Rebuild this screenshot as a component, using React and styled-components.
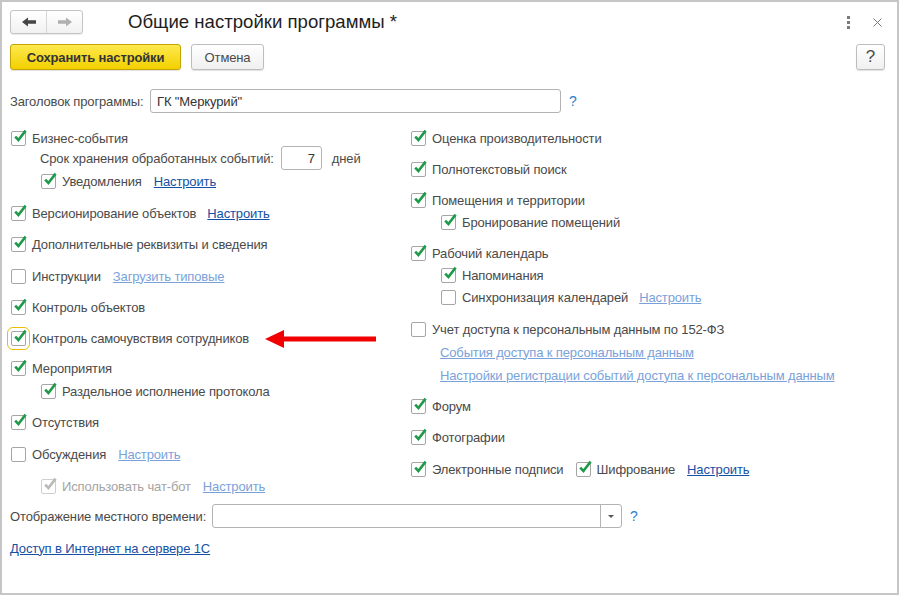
import React from 'react';
import styled, { createGlobalStyle } from 'styled-components';

const Global = createGlobalStyle`
  html, body { margin: 0; padding: 0; background: #fff; }
  body {
    font-family: "Liberation Sans", Arial, sans-serif;
    font-size: 13px;
    letter-spacing: -0.14px;
    color: #4a4a4a;
  }
`;

const Window = styled.div`
  box-sizing: border-box;
  width: 899px;
  height: 595px;
  border: 2px solid #c6c6c6;
  background: #fff;
  position: relative;
  padding: 8px 8px 0 8px;
`;

const Header = styled.div`
  display: flex;
  align-items: center;
  height: 24px;
`;

const NavGroup = styled.div`
  box-sizing: border-box;
  display: flex;
  width: 73px;
  height: 24px;
  border: 1px solid #c4c4c4;
  border-radius: 3px;
  background: linear-gradient(#ffffff, #f1f1f1);
  box-shadow: 0 1px 1px rgba(0,0,0,0.08);
`;

const NavBtn = styled.div`
  flex: 1;
  display: flex;
  align-items: center;
  justify-content: center;
  & + & { border-left: 1px solid #d6d6d6; }
`;

const Title = styled.div`
  margin-left: 45px;
  font-size: 18.6px;
  letter-spacing: 0;
  color: #1e1e1e;
`;

const HeaderRight = styled.div`
  margin-left: auto;
  margin-right: 7px;
  display: flex;
  align-items: center;
  gap: 23px;
`;

const Dots = styled.div`
  display: flex;
  flex-direction: column;
  gap: 2px;
  & > span { width: 3px; height: 3px; background: #7a7a7a; display: block; }
`;

const ButtonsRow = styled.div`
  display: flex;
  align-items: center;
  margin-top: 10px;
  height: 26px;
`;

const Button = styled.div`
  box-sizing: border-box;
  height: 26px;
  width: ${p => p.$w}px;
  margin-left: ${p => p.$ml || 0}px;
  margin-right: ${p => p.$mr || 0}px;
  display: flex;
  align-items: center;
  justify-content: center;
  border-radius: 3px;
  font-size: ${p => p.$fs || 13}px;
  border: 1px solid ${p => (p.$primary ? '#c4a400' : '#bdbdbd')};
  background: ${p => (p.$primary ? 'linear-gradient(#fde94f, #f3d000)' : 'linear-gradient(#ffffff, #f0f0f0)')};
  font-weight: ${p => (p.$primary ? 'bold' : 'normal')};
  color: ${p => (p.$primary ? '#333' : '#4a4a4a')};
  box-shadow: 0 1px 1px rgba(0,0,0,0.12);
`;

const Spacer = styled.div`flex: 1;`;

const FieldRow = styled.div`
  display: flex;
  align-items: center;
  margin-top: ${p => p.$mt}px;
  height: 24px;
`;

const FieldLabel = styled.div`
  width: ${p => p.$w}px;
  flex: none;
  white-space: nowrap;
`;

const Input = styled.div`
  box-sizing: border-box;
  width: ${p => p.$w}px;
  height: 24px;
  border: 1px solid #b3b3b3;
  border-radius: 3px;
  display: flex;
  align-items: center;
  justify-content: ${p => (p.$right ? 'flex-end' : 'flex-start')};
  padding: 0 6px;
  color: #333;
  background: #fff;
  margin-left: ${p => p.$ml || 0}px;
`;

const Select = styled.div`
  box-sizing: border-box;
  width: 410px;
  height: 24px;
  border: 1px solid #b3b3b3;
  border-radius: 3px;
  display: flex;
  background: #fff;
`;

const SelectValue = styled.div`flex: 1;`;

const SelectBtn = styled.div`
  width: 20px;
  border-left: 1px solid #b3b3b3;
  display: flex;
  align-items: center;
  justify-content: center;
  &::after {
    content: '';
    border-left: 3px solid transparent;
    border-right: 3px solid transparent;
    border-top: 3px solid #555;
  }
`;

const HelpMark = styled.span`
  margin-left: 8px;
  color: #2a80d0;
  font-size: 14px;
`;

const Columns = styled.div`
  display: grid;
  grid-template-columns: 400px 1fr;
  margin-top: 15px;
`;

const Column = styled.div`
  display: flex;
  flex-direction: column;
`;

const Row = styled.div`
  display: flex;
  align-items: center;
  height: 20px;
  margin-top: ${p => p.$mt || 0}px;
  padding-left: ${p => p.$indent || 0}px;
  white-space: nowrap;
`;

const CheckWrap = styled.span`
  display: inline-flex;
  align-items: center;
  margin-left: ${p => p.$ml || 0}px;
  color: ${p => (p.$disabled ? '#a4a4a4' : 'inherit')};
`;

const Box = styled.span`
  position: relative;
  box-sizing: border-box;
  width: 15px;
  height: 15px;
  margin-left: 1px;
  border: 1px solid ${p => (p.$disabled ? '#cfcfcf' : '#a6a6a6')};
  border-radius: 2px;
  background: #fff;
  flex: none;
  outline: ${p => (p.$focus ? '1px solid #ecbd00' : 'none')};
  outline-offset: 3px;
`;

const CheckSvg = styled.svg`
  position: absolute;
  left: 1px;
  top: -3px;
  overflow: visible;
`;

const CheckText = styled.span`
  margin-left: 6px;
`;

const Link = styled.a`
  margin-left: ${p => p.$ml || 0}px;
  color: ${p => (p.$light ? '#7aa2da' : '#1550a4')};
  text-decoration: underline;
  cursor: pointer;
`;

const Arrow = styled.svg`
  position: absolute;
  left: 263px;
  top: 328px;
`;

function Check({ checked, label, disabled, focus, ml }) {
  return (
    <CheckWrap $disabled={disabled} $ml={ml}>
      <Box $disabled={disabled} $focus={focus}>
        {checked && (
          <CheckSvg width="14" height="14" viewBox="0 0 14 14">
            <polyline
              points="2.2,7.6 5.4,11 12.6,1.6"
              fill="none"
              stroke={disabled ? '#b9b9b9' : '#1f9a4a'}
              strokeWidth="2.6"
              strokeLinejoin="miter"
            />
          </CheckSvg>
        )}
      </Box>
      <CheckText>{label}</CheckText>
    </CheckWrap>
  );
}

function NavArrow({ dir, color }) {
  const d = 'M0 5 L6 0.5 L6 3.3 L14 3.3 L14 6.7 L6 6.7 L6 9.5 Z';
  return (
    <svg width="14" height="10" viewBox="0 0 14 10" style={dir === 'right' ? { transform: 'scaleX(-1)' } : undefined}>
      <path d={d} fill={color} />
    </svg>
  );
}

export default function App() {
  return (
    <>
      <Global />
      <Window>
        <Header>
          <NavGroup>
            <NavBtn><NavArrow dir="left" color="#454545" /></NavBtn>
            <NavBtn><NavArrow dir="right" color="#b0b0b0" /></NavBtn>
          </NavGroup>
          <Title>Общие настройки программы *</Title>
          <HeaderRight>
            <Dots><span /><span /><span /></Dots>
            <svg width="9" height="9" viewBox="0 0 9 9">
              <path d="M0.5 0.5 L8.5 8.5 M8.5 0.5 L0.5 8.5" stroke="#777" strokeWidth="1" />
            </svg>
          </HeaderRight>
        </Header>

        <ButtonsRow>
          <Button $primary $w={171}>Сохранить настройки</Button>
          <Button $w={73} $ml={10}>Отмена</Button>
          <Spacer />
          <Button $w={29} $fs={17} $mr={4}>?</Button>
        </ButtonsRow>

        <FieldRow $mt={19}>
          <FieldLabel $w={140}>Заголовок программы:</FieldLabel>
          <Input $w={411}>ГК "Меркурий"</Input>
          <HelpMark>?</HelpMark>
        </FieldRow>

        <Columns>
          <Column>
            <Row><Check checked label="Бизнес-события" /></Row>
            <Row $indent={30}>
              <span>Срок хранения обработанных событий:</span>
              <Input $w={41} $ml={7} $right>7</Input>
              <span style={{ marginLeft: 10 }}>дней</span>
            </Row>
            <Row $indent={30} $mt={3}>
              <Check checked label="Уведомления" />
              <Link $ml={12}>Настроить</Link>
            </Row>
            <Row $mt={12}>
              <Check checked label="Версионирование объектов" />
              <Link $ml={11}>Настроить</Link>
            </Row>
            <Row $mt={11}><Check checked label="Дополнительные реквизиты и сведения" /></Row>
            <Row $mt={12}>
              <Check label="Инструкции" />
              <Link $ml={12} $light>Загрузить типовые</Link>
            </Row>
            <Row $mt={11}><Check checked label="Контроль объектов" /></Row>
            <Row $mt={11}><Check checked focus label="Контроль самочувствия сотрудников" /></Row>
            <Row $mt={10}><Check checked label="Мероприятия" /></Row>
            <Row $indent={30} $mt={3}><Check checked label="Раздельное исполнение протокола" /></Row>
            <Row $mt={11}><Check checked label="Отсутствия" /></Row>
            <Row $mt={12}>
              <Check label="Обсуждения" />
              <Link $ml={12} $light>Настроить</Link>
            </Row>
            <Row $indent={30} $mt={12}>
              <Check checked disabled label="Использовать чат-бот" />
              <Link $ml={12} $light>Настроить</Link>
            </Row>
          </Column>

          <Column>
            <Row><Check checked label="Оценка производительности" /></Row>
            <Row $mt={11}><Check checked label="Полнотекстовый поиск" /></Row>
            <Row $mt={11}><Check checked label="Помещения и территории" /></Row>
            <Row $indent={30} $mt={2}><Check checked label="Бронирование помещений" /></Row>
            <Row $mt={11}><Check checked label="Рабочий календарь" /></Row>
            <Row $indent={30} $mt={2}><Check checked label="Напоминания" /></Row>
            <Row $indent={30} $mt={2}>
              <Check label="Синхронизация календарей" />
              <Link $ml={11} $light>Настроить</Link>
            </Row>
            <Row $mt={12}><Check label="Учет доступа к персональным данным по 152-ФЗ" /></Row>
            <Row $indent={30} $mt={3}><Link $light>События доступа к персональным данным</Link></Row>
            <Row $indent={30} $mt={3}><Link $light>Настройки регистрации событий доступа к персональным данным</Link></Row>
            <Row $mt={11}><Check checked label="Форум" /></Row>
            <Row $mt={11}><Check checked label="Фотографии" /></Row>
            <Row $mt={12}>
              <Check checked label="Электронные подписи" />
              <Check checked label="Шифрование" ml={11} />
              <Link $ml={12}>Настроить</Link>
            </Row>
          </Column>
        </Columns>

        <FieldRow $mt={8}>
          <FieldLabel $w={202}>Отображение местного времени:</FieldLabel>
          <Select>
            <SelectValue />
            <SelectBtn />
          </Select>
          <HelpMark>?</HelpMark>
        </FieldRow>

        <Row $mt={10}>
          <Link>Доступ в Интернет на сервере 1С</Link>
        </Row>

        <Arrow width="112" height="18" viewBox="0 0 112 18">
          <polygon points="0,9 19,0 19,18" fill="#f00000" />
          <rect x="17" y="6.5" width="94" height="5" fill="#f00000" />
        </Arrow>
      </Window>
    </>
  );
}
